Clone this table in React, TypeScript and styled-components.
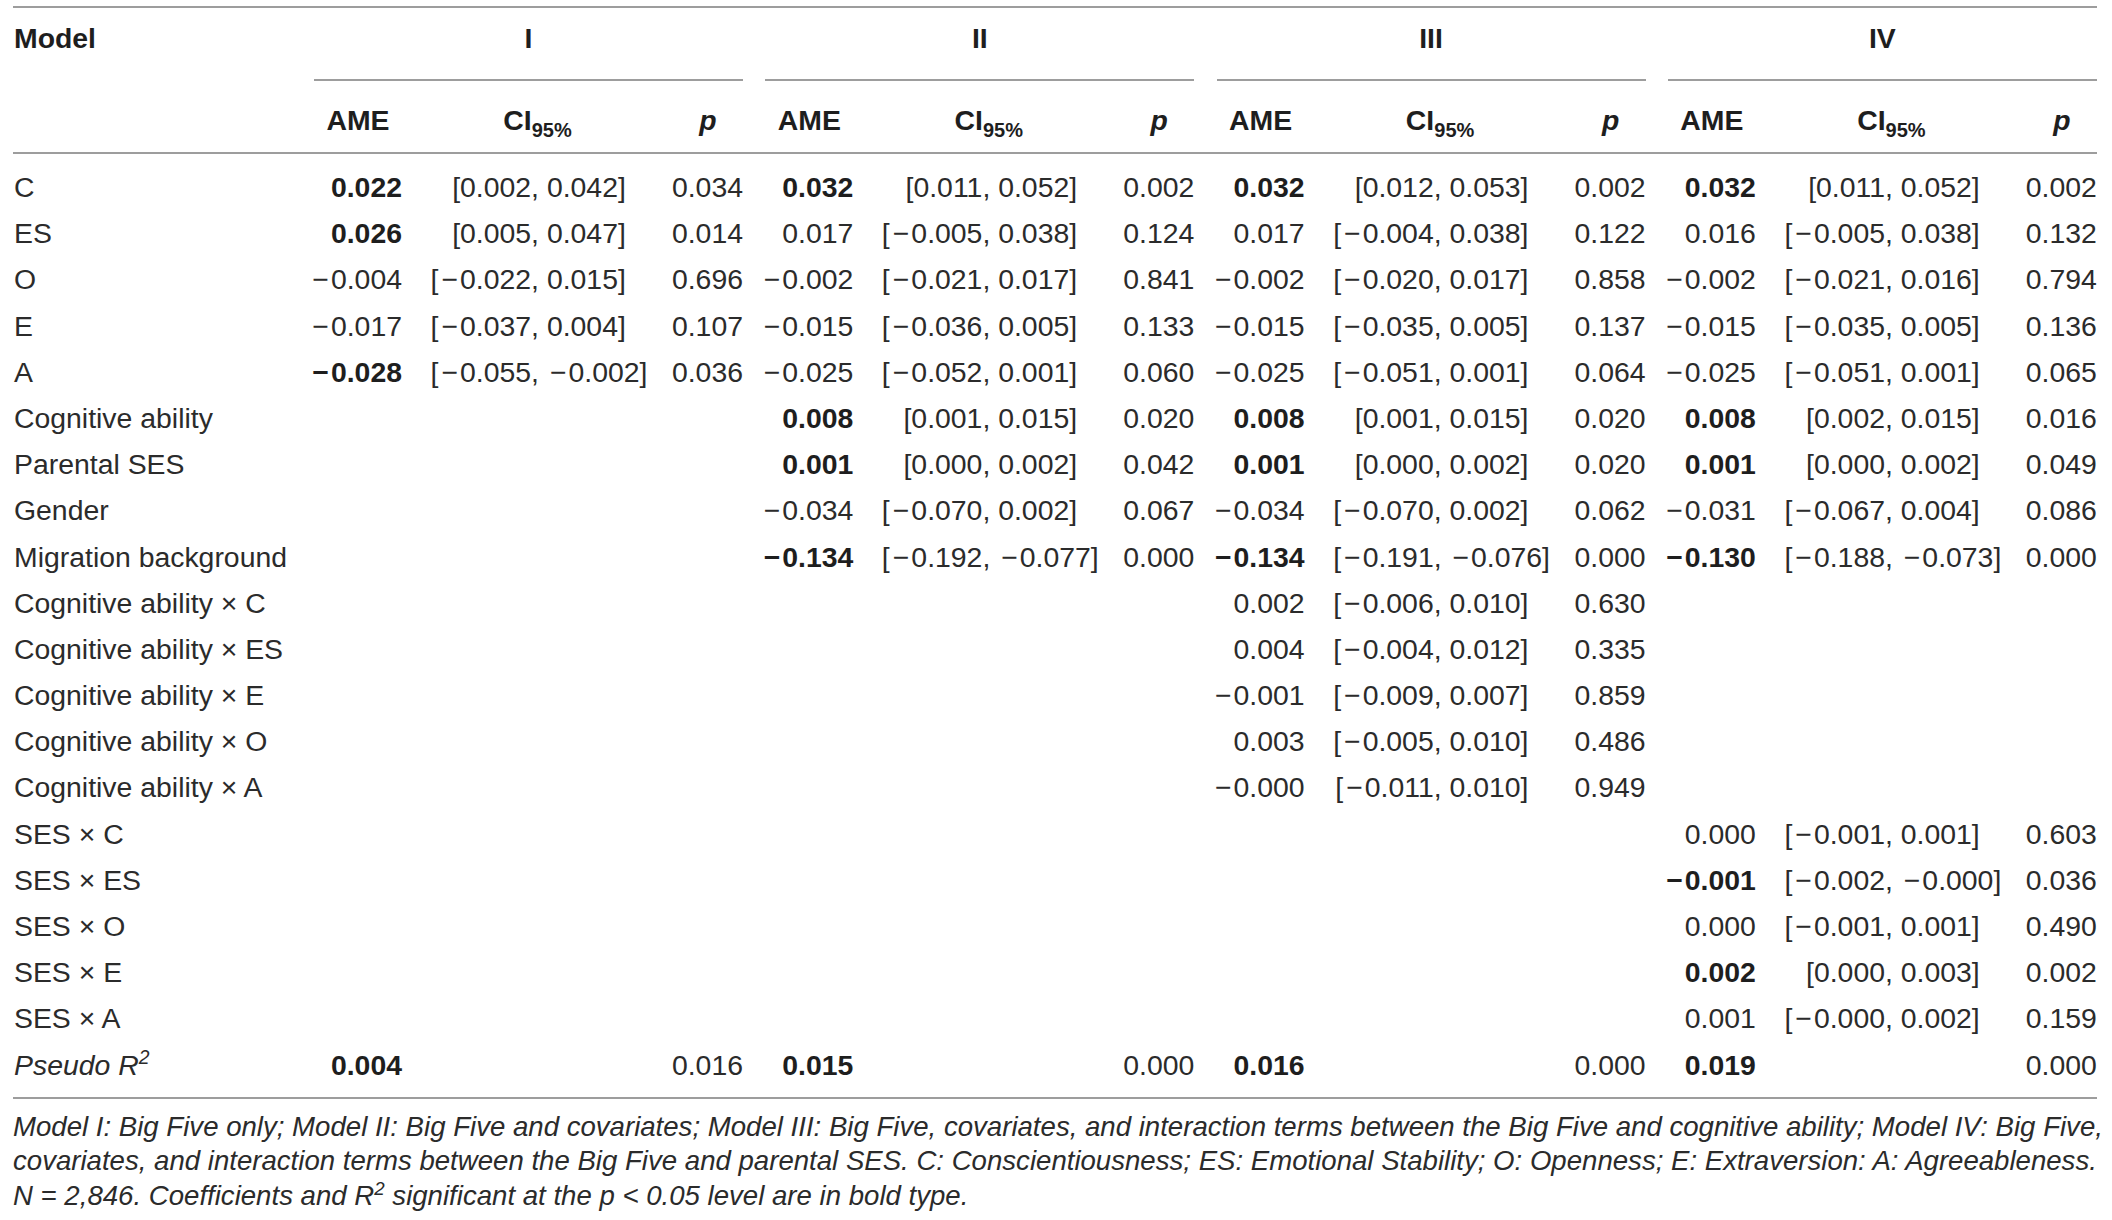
import React, { FC, ReactNode } from 'react';
import styled, { createGlobalStyle } from 'styled-components';

const RULE = '2px solid #9d9d9d';

const GlobalStyle = createGlobalStyle`
  html,
  body {
    margin: 0;
    padding: 0;
    background: #fff;
  }

  body {
    font-family: "Liberation Sans", Arial, Helvetica, sans-serif;
    color: #2b2b2b;
  }
`;

const Page = styled.div`
  width: 2084px;
  padding: 6px 0 0 13px;
  font-size: 28.4px;
`;

const Table = styled.div`
  border-top: ${RULE};
`;

const TitleBand = styled.div`
  display: flex;
  column-gap: 22.3px;
  padding-top: 7px;
  line-height: 46px;
  font-weight: 700;
  color: #1e1e1e;
`;

const SubBand = styled.div`
  display: flex;
  column-gap: 22.3px;
  padding: 16px 0 9px;
  line-height: 46px;
  font-weight: 700;
  color: #1e1e1e;
  border-bottom: ${RULE};
`;

const Body = styled.div`
  padding: 10px 0 9px;
  border-bottom: ${RULE};
`;

const Row = styled.div`
  display: flex;
  column-gap: 22.3px;
  height: 46.2px;
  line-height: 46.2px;
  white-space: nowrap;
`;

const Label = styled.div<{ $italic?: boolean }>`
  flex: none;
  width: 277.7px;
  padding-left: 1px;
  font-style: ${(p) => (p.$italic ? 'italic' : 'normal')};
`;

const ModelTitle = styled.div`
  flex: none;
  width: 429px;
  padding-bottom: 18px;
  text-align: center;
  border-bottom: ${RULE};
`;

const SubGroup = styled.div`
  flex: none;
  width: 429px;
  display: grid;
  grid-template-columns: 88px 1fr 70px;
  text-align: center;
`;

const Group = styled.div`
  flex: none;
  width: 429px;
  display: grid;
  grid-template-columns: 88px 137px 1fr 84px;
`;

const Num = styled.div<{ $bold?: boolean }>`
  display: flex;
  justify-content: flex-end;
  font-weight: ${(p) => (p.$bold ? 700 : 400)};
  color: ${(p) => (p.$bold ? '#1e1e1e' : 'inherit')};
`;

const CiLeft = styled.div`
  text-align: right;
`;

const CiRight = styled.div`
  white-space: pre;
`;

/* the source sets its minus sign a little wider than Arial's */
const MinusSign = styled.span`
  padding: 0 2px 0 3px;
`;

const Sub = styled.sub`
  font-size: 20px;
  line-height: 0;
  vertical-align: -7px;
`;

const Sup = styled.sup`
  font-size: 0.68em;
  line-height: 0;
  vertical-align: 0.55em;
`;

const Footnote = styled.p`
  margin: 0;
  padding-top: 11px;
  font-size: 27.6px;
  font-style: italic;
  line-height: 34.5px;
  white-space: nowrap;
`;

const Signed: FC<{ value: string }> = ({ value }) =>
  value.startsWith('−') ? (
    <>
      <MinusSign>−</MinusSign>
      {value.slice(1)}
    </>
  ) : (
    <>{value}</>
  );

type Cell = { ame: string; bold?: boolean; ci?: [string, string]; p: string } | null;

const c = (ame: string, lo: string, hi: string, p: string, bold = false): Cell => ({
  ame,
  bold,
  ci: [lo, hi],
  p,
});

const rows: { label: ReactNode; italic?: boolean; cells: Cell[] }[] = [
  {
    label: 'C',
    cells: [
      c('0.022', '0.002', '0.042', '0.034', true),
      c('0.032', '0.011', '0.052', '0.002', true),
      c('0.032', '0.012', '0.053', '0.002', true),
      c('0.032', '0.011', '0.052', '0.002', true),
    ],
  },
  {
    label: 'ES',
    cells: [
      c('0.026', '0.005', '0.047', '0.014', true),
      c('0.017', '−0.005', '0.038', '0.124'),
      c('0.017', '−0.004', '0.038', '0.122'),
      c('0.016', '−0.005', '0.038', '0.132'),
    ],
  },
  {
    label: 'O',
    cells: [
      c('−0.004', '−0.022', '0.015', '0.696'),
      c('−0.002', '−0.021', '0.017', '0.841'),
      c('−0.002', '−0.020', '0.017', '0.858'),
      c('−0.002', '−0.021', '0.016', '0.794'),
    ],
  },
  {
    label: 'E',
    cells: [
      c('−0.017', '−0.037', '0.004', '0.107'),
      c('−0.015', '−0.036', '0.005', '0.133'),
      c('−0.015', '−0.035', '0.005', '0.137'),
      c('−0.015', '−0.035', '0.005', '0.136'),
    ],
  },
  {
    label: 'A',
    cells: [
      c('−0.028', '−0.055', '−0.002', '0.036', true),
      c('−0.025', '−0.052', '0.001', '0.060'),
      c('−0.025', '−0.051', '0.001', '0.064'),
      c('−0.025', '−0.051', '0.001', '0.065'),
    ],
  },
  {
    label: 'Cognitive ability',
    cells: [
      null,
      c('0.008', '0.001', '0.015', '0.020', true),
      c('0.008', '0.001', '0.015', '0.020', true),
      c('0.008', '0.002', '0.015', '0.016', true),
    ],
  },
  {
    label: 'Parental SES',
    cells: [
      null,
      c('0.001', '0.000', '0.002', '0.042', true),
      c('0.001', '0.000', '0.002', '0.020', true),
      c('0.001', '0.000', '0.002', '0.049', true),
    ],
  },
  {
    label: 'Gender',
    cells: [
      null,
      c('−0.034', '−0.070', '0.002', '0.067'),
      c('−0.034', '−0.070', '0.002', '0.062'),
      c('−0.031', '−0.067', '0.004', '0.086'),
    ],
  },
  {
    label: 'Migration background',
    cells: [
      null,
      c('−0.134', '−0.192', '−0.077', '0.000', true),
      c('−0.134', '−0.191', '−0.076', '0.000', true),
      c('−0.130', '−0.188', '−0.073', '0.000', true),
    ],
  },
  { label: 'Cognitive ability × C', cells: [null, null, c('0.002', '−0.006', '0.010', '0.630'), null] },
  { label: 'Cognitive ability × ES', cells: [null, null, c('0.004', '−0.004', '0.012', '0.335'), null] },
  { label: 'Cognitive ability × E', cells: [null, null, c('−0.001', '−0.009', '0.007', '0.859'), null] },
  { label: 'Cognitive ability × O', cells: [null, null, c('0.003', '−0.005', '0.010', '0.486'), null] },
  { label: 'Cognitive ability × A', cells: [null, null, c('−0.000', '−0.011', '0.010', '0.949'), null] },
  { label: 'SES × C', cells: [null, null, null, c('0.000', '−0.001', '0.001', '0.603')] },
  { label: 'SES × ES', cells: [null, null, null, c('−0.001', '−0.002', '−0.000', '0.036', true)] },
  { label: 'SES × O', cells: [null, null, null, c('0.000', '−0.001', '0.001', '0.490')] },
  { label: 'SES × E', cells: [null, null, null, c('0.002', '0.000', '0.003', '0.002', true)] },
  { label: 'SES × A', cells: [null, null, null, c('0.001', '−0.000', '0.002', '0.159')] },
  {
    label: (
      <>
        Pseudo R<Sup>2</Sup>
      </>
    ),
    italic: true,
    cells: [
      { ame: '0.004', bold: true, p: '0.016' },
      { ame: '0.015', bold: true, p: '0.000' },
      { ame: '0.016', bold: true, p: '0.000' },
      { ame: '0.019', bold: true, p: '0.000' },
    ],
  },
];

const models = ['I', 'II', 'III', 'IV'];

const ModelCells: FC<{ cell: Cell }> = ({ cell }) => (
  <Group>
    <Num $bold={cell?.bold}>{cell && <Signed value={cell.ame} />}</Num>
    <CiLeft>
      {cell?.ci && (
        <>
          [<Signed value={cell.ci[0]} />,
        </>
      )}
    </CiLeft>
    <CiRight>
      {cell?.ci && (
        <>
          {' '}
          <Signed value={cell.ci[1]} />]
        </>
      )}
    </CiRight>
    <Num>{cell?.p}</Num>
  </Group>
);

const App: FC = () => (
  <Page>
    <GlobalStyle />
    <Table>
      <TitleBand>
        <Label>Model</Label>
        {models.map((m) => (
          <ModelTitle key={m}>{m}</ModelTitle>
        ))}
      </TitleBand>
      <SubBand>
        <Label />
        {models.map((m) => (
          <SubGroup key={m}>
            <span>AME</span>
            <span>
              CI<Sub>95%</Sub>
            </span>
            <i>p</i>
          </SubGroup>
        ))}
      </SubBand>
      <Body>
        {rows.map((r, i) => (
          <Row key={i}>
            <Label $italic={r.italic}>{r.label}</Label>
            {r.cells.map((cell, j) => (
              <ModelCells key={j} cell={cell} />
            ))}
          </Row>
        ))}
      </Body>
    </Table>
    <Footnote>
      Model I: Big Five only; Model II: Big Five and covariates; Model III: Big Five, covariates, and interaction terms
      between the Big Five and cognitive ability; Model IV: Big Five,
      <br />
      covariates, and interaction terms between the Big Five and parental SES. C: Conscientiousness; ES: Emotional
      Stability; O: Openness; E: Extraversion: A: Agreeableness.
      <br />
      N = 2,846. Coefficients and R<Sup>2</Sup> significant at the p &lt; 0.05 level are in bold type.
    </Footnote>
  </Page>
);

export default App;
